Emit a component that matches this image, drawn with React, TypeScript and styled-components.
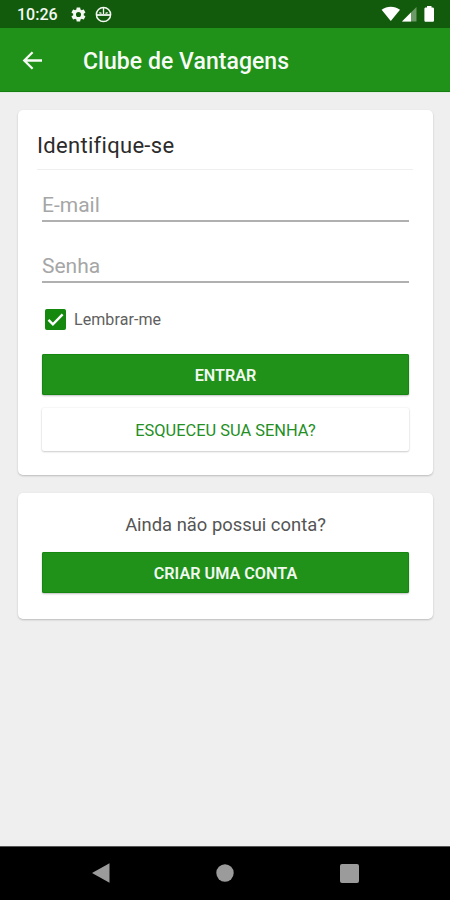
import React, { useState } from "react";
import styled, { createGlobalStyle } from "styled-components";

const GlobalStyle = createGlobalStyle`
  * { box-sizing: border-box; }
  body { margin: 0; background: #efefef; font-family: Roboto, "Liberation Sans", sans-serif; }
  button, input { font-family: inherit; }
`;

const Screen = styled.div`
  width: 450px;
  height: 900px;
  display: flex;
  flex-direction: column;
  overflow: hidden;
  background: #efefef;
`;

const StatusBar = styled.div`
  height: 28px;
  flex: none;
  display: flex;
  align-items: center;
  padding: 0 15px 0 17px;
  background: #125b0c;
  color: #f4f8f3;
`;

const Clock = styled.span`
  width: 53px;
  font-size: 16px;
  line-height: 28px;
  font-weight: 500;
  padding-top: 2px;
`;

const StatusIcons = styled.div<{ $end?: boolean }>`
  display: flex;
  align-items: center;
  gap: ${(p) => (p.$end ? 0 : 8)}px;
  margin-left: ${(p) => (p.$end ? "auto" : "0")};
`;

const AppBar = styled.header`
  height: 64px;
  flex: none;
  display: flex;
  align-items: center;
  padding: 2px 22px 0;
  background: #209119;
  color: #f7fbf6;
  border-bottom: 1px solid #148010;
`;

const BackButton = styled.button`
  width: 61px;
  height: 40px;
  padding: 0;
  border: 0;
  display: flex;
  align-items: center;
  background: none;
  color: inherit;
`;

const AppTitle = styled.h1`
  margin: 2px 0 0;
  font-size: 23px;
  line-height: 30px;
  font-weight: 500;
  letter-spacing: 0.05px;
  white-space: nowrap;
`;

const Content = styled.main`
  flex: 1;
  display: flex;
  flex-direction: column;
  gap: 18px;
  padding: 17px 17px 0 18px;
  border-top: 1px solid #e2eae1;
`;

const Card = styled.section<{ $height: number }>`
  height: ${(p) => p.$height}px;
  display: flex;
  flex-direction: column;
  padding: 0 24px;
  border-radius: 5px;
  background: #fff;
  box-shadow: 0 1px 2px rgba(0, 0, 0, 0.22);
`;

const CardTitle = styled.h2`
  height: 60px;
  margin: 0 -4px 0 -5px;
  padding-top: 21px;
  border-bottom: 1px solid #efefef;
  font-size: 22px;
  line-height: 30px;
  font-weight: 400;
  letter-spacing: 0.3px;
  color: #2b2b2b;
`;

const Field = styled.input<{ $height: number; $top: number }>`
  width: 100%;
  height: ${(p) => p.$height}px;
  padding: ${(p) => p.$top}px 0 0;
  border: 0;
  border-bottom: 2px solid #b0b0b0;
  border-radius: 0;
  outline: 0;
  background: transparent;
  font-size: 21px;
  font-weight: 400;
  color: #262626;
  &::placeholder { color: #a6a6a6; opacity: 1; }
`;

const Remember = styled.label`
  display: flex;
  align-items: center;
  gap: 8px;
  height: 22px;
  margin: 25px 0 24px 3px;
  font-size: 16px;
  letter-spacing: 0.08px;
  color: #606060;
`;

const HiddenCheck = styled.input`
  appearance: none;
  width: 0;
  height: 0;
  margin: 0 -8px 0 0;
`;

const Button = styled.button<{ $outline?: boolean }>`
  width: 100%;
  height: ${(p) => (p.$outline ? 43 : 41)}px;
  flex: none;
  margin: ${(p) => (p.$outline ? "13px 0 0" : "0")};
  padding: ${(p) => (p.$outline ? "2px 0 0" : "1px 0 0")};
  border: 0;
  border-radius: 2px;
  font-size: ${(p) => (p.$outline ? 16.4 : 16.2)}px;
  font-weight: ${(p) => (p.$outline ? 450 : 600)};
  background: ${(p) => (p.$outline ? "#fff" : "#209119")};
  color: ${(p) => (p.$outline ? "#248f1f" : "#f1f8f0")};
  box-shadow: ${(p) => (p.$outline ? "0 0 2px rgba(0,0,0,.1), 0 1px 2px rgba(0,0,0,.18)" : "inset 0 0 0 1px #158710, 0 1px 2px rgba(0,0,0,.25)")};
`;

const Question = styled.p`
  margin: 0;
  height: 59px;
  padding-top: 17px;
  text-align: center;
  font-size: 18.4px;
  line-height: 30px;
  font-weight: 400;
  color: #555;
`;

const NavBar = styled.nav`
  height: 54px;
  flex: none;
  display: grid;
  grid-template-columns: 36px 36px 36px;
  justify-content: center;
  align-items: center;
  column-gap: 88px;
  padding-bottom: 1px;
  background: #000;
  border-top: 1px solid #555;
`;

const NavButton = styled.button`
  height: 36px;
  padding: 0;
  border: 0;
  display: flex;
  align-items: center;
  justify-content: center;
  background: none;
  color: #9b9b9b;
`;

const GearIcon = () => (
  <svg width="17" height="17" viewBox="0 0 24 24" fill="currentColor">
    <path d="M19.4 13a8 8 0 0 0 0-2l2.1-1.6c.2-.2.3-.5.1-.7l-2-3.4c-.1-.2-.4-.3-.6-.2l-2.5 1a7 7 0 0 0-1.7-1l-.4-2.6c0-.3-.2-.5-.5-.5h-4c-.3 0-.5.2-.5.5L9 5.1a7 7 0 0 0-1.7 1l-2.5-1c-.2-.1-.5 0-.6.2l-2 3.4c-.1.2-.1.5.1.7L4.5 11a8 8 0 0 0 0 2l-2.2 1.6c-.2.2-.2.5-.1.7l2 3.4c.1.2.4.3.6.2l2.5-1c.5.4 1.1.7 1.7 1l.4 2.6c0 .3.2.5.5.5h4c.3 0 .5-.2.5-.5l.4-2.6a7 7 0 0 0 1.7-1l2.5 1c.2.1.5 0 .6-.2l2-3.4c.1-.2.1-.5-.1-.7zM12 15.600a3.600 3.600 0 1 1 0-7.200 3.600 3.600 0 0 1 0 7.200z" />
  </svg>
);

const CircleIcon = () => (
  <svg width="17" height="17" viewBox="0 0 17 17" fill="none" stroke="currentColor">
    <circle cx="8.5" cy="8.5" r="7.1" strokeWidth="1.5" />
    <path d="M2 9h13" strokeWidth="1.8" />
    <path d="M8.5 2v6M4.300 6.600l2.200.7M12.700 6.600l-2.200.7" strokeWidth="1.300" />
  </svg>
);

const SignalIcons = () => (
  <svg width="54" height="18" viewBox="0 0 54 18">
    <path d="M.6 4.800C6 .8 13.500.8 19 4.800L9.800 16z" fill="#fff" />
    <path d="M21 16.400 35.500 2.100v14.300z" fill="#fff" fillOpacity=".38" />
    <path d="M21 16.400 30 7.600v8.800z" fill="#fff" />
    <path d="M46 1.100h4.500v1.500h1.200c.7 0 1.300.6 1.300 1.300v11.500c0 .7-.6 1.300-1.300 1.300h-7c-.7 0-1.300-.6-1.300-1.300V3.900c0-.7.600-1.300 1.300-1.300H46z" fill="#fff" />
  </svg>
);

const BackIcon = () => (
  <svg width="22" height="22" viewBox="0 0 22 22" fill="none" stroke="currentColor" strokeWidth="2.300">
    <path d="M10.600 2.300 2.300 10.500l8.300 8.200M2.300 10.500H20" />
  </svg>
);

const CheckIcon = ({ checked }: { checked: boolean }) => (
  <svg width="21" height="21" viewBox="0 0 21 21">
    <rect x=".5" y=".5" width="20" height="20" rx="1" fill={checked ? "#14890e" : "#fff"} stroke="#14890e" />
    {checked && <path d="m3.500 10.800 4.400 4.500 9.700-9.900" fill="none" stroke="#fff" strokeWidth="2.400" />}
  </svg>
);

export default function App() {
  const [remember, setRemember] = useState(true);
  return (
    <Screen>
      <GlobalStyle />
      <StatusBar>
        <Clock>10:26</Clock>
        <StatusIcons><GearIcon /><CircleIcon /></StatusIcons>
        <StatusIcons $end><SignalIcons /></StatusIcons>
      </StatusBar>
      <AppBar>
        <BackButton aria-label="Voltar"><BackIcon /></BackButton>
        <AppTitle>Clube de Vantagens</AppTitle>
      </AppBar>
      <Content>
        <Card $height={365}>
          <CardTitle>Identifique-se</CardTitle>
          <Field $height={52} $top={20} placeholder="E-mail" type="email" />
          <Field $height={61} $top={28} placeholder="Senha" type="password" />
          <Remember>
            <HiddenCheck type="checkbox" checked={remember} onChange={() => setRemember(!remember)} />
            <CheckIcon checked={remember} />
            Lembrar-me
          </Remember>
          <Button>ENTRAR</Button>
          <Button $outline>ESQUECEU SUA SENHA?</Button>
        </Card>
        <Card $height={126}>
          <Question>Ainda não possui conta?</Question>
          <Button>CRIAR UMA CONTA</Button>
        </Card>
      </Content>
      <NavBar>
        <NavButton aria-label="Voltar">
          <svg width="18" height="20" viewBox="0 0 18 20"><path d="M0 10 17.500.3v19.400z" fill="currentColor" /></svg>
        </NavButton>
        <NavButton aria-label="Início">
          <svg width="18" height="18" viewBox="0 0 18 18"><circle cx="9" cy="9" r="8.700" fill="currentColor" /></svg>
        </NavButton>
        <NavButton aria-label="Recentes">
          <svg width="19" height="19" viewBox="0 0 19 19"><rect width="19" height="19" rx="2" fill="currentColor" /></svg>
        </NavButton>
      </NavBar>
    </Screen>
  );
}
